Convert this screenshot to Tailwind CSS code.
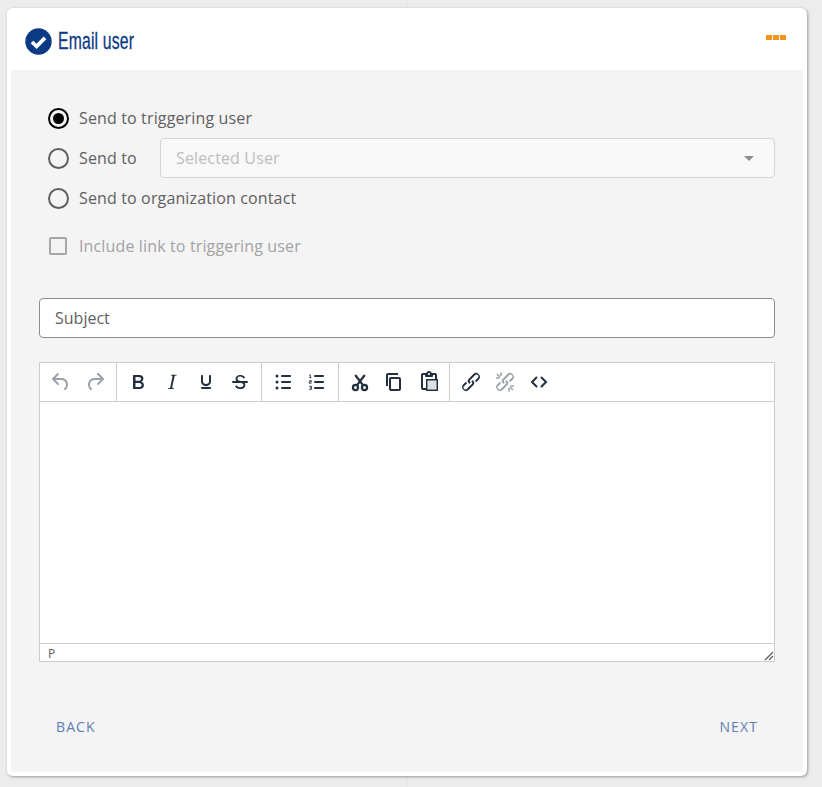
<!doctype html>
<html>
<head>
<meta charset="UTF-8">
<title>Email user</title>
<script src="https://cdn.jsdelivr.net/npm/@tailwindcss/browser@4"></script>
</head>
<body class="bg-[#ececec] font-['Open_Sans',sans-serif]">
<div class="relative h-[787px] w-[822px] overflow-hidden pt-2 pl-[7px]">
  <!-- timeline line behind the card -->
  <div class="absolute top-0 left-[406px] h-full w-px bg-[#e2e2e2]"></div>

  <div class="relative flex h-[768px] w-[800px] flex-col rounded-md bg-white px-1 pb-1 shadow-[1px_1px_3px_rgba(0,0,0,0.35)]">
    <div class="-mx-1 flex h-[62px] shrink-0 items-center justify-between pr-[21px] pl-[18px]">
      <div class="flex items-center gap-[6px]">
        <svg width="27" height="27" viewBox="0 0 27 27" class="mt-[4px]">
          <circle cx="13.5" cy="13.5" r="13.2" fill="#0b3a84"/>
          <path d="M7 14l4.6 4.4 8.4-8.6" fill="none" stroke="#fff" stroke-width="3.8"/>
        </svg>
        <span class="mt-[4px] w-[77px] origin-left scale-x-[0.655] font-['Liberation_Sans',sans-serif] text-[24px] leading-none tracking-[0.3px] whitespace-nowrap text-[#0b3a84] [-webkit-text-stroke:0.3px_#0b3a84]">Email user</span>
      </div>
      <div class="mb-[3px] flex gap-px">
        <span class="h-[5px] w-[6px] bg-[#f7941d]"></span>
        <span class="h-[5px] w-[6px] bg-[#f7941d]"></span>
        <span class="h-[5px] w-[6px] bg-[#f7941d]"></span>
      </div>
    </div>

    <div class="flex-1 bg-[#f4f4f4] px-7 pt-[28px] text-[16px] tracking-[0.14px] text-[#606060]">
      <div class="flex h-10 items-center pl-[9px]">
        <span class="flex h-[21px] w-[21px] items-center justify-center rounded-full border-2 border-black">
          <span class="h-[11px] w-[11px] rounded-full bg-black"></span>
        </span>
        <span class="ml-[10px]">Send to triggering user</span>
      </div>
      <div class="flex h-10 items-center pl-[9px]">
        <span class="h-[21px] w-[21px] rounded-full border-2 border-[#5f5f5f]"></span>
        <span class="ml-[10px]">Send to</span>
        <div class="ml-auto flex h-10 w-[615px] items-center justify-between rounded border border-[#d4d4d4] bg-[#f8f8f8] pr-[20px] pl-[15px] text-[#bdbdbd]">
          <span>Selected User</span>
          <span class="h-0 w-0 border-x-[5px] border-t-[5px] border-x-transparent border-t-[#8f8f8f]"></span>
        </div>
      </div>
      <div class="flex h-10 items-center pl-[9px]">
        <span class="h-[21px] w-[21px] rounded-full border-2 border-[#5f5f5f]"></span>
        <span class="ml-[10px]">Send to organization contact</span>
      </div>
      <div class="mt-[8px] flex h-10 items-center pl-[10px] text-[#a3a3a3]">
        <span class="h-[18px] w-[18px] rounded-[2px] border-2 border-[#a6a6a6]"></span>
        <span class="ml-[12px]">Include link to triggering user</span>
      </div>

      <div class="mt-[32px] flex h-10 items-center rounded border border-[#8c8c8c] bg-white px-[15px] tracking-normal text-[#606060]">Subject</div>

      <div class="mt-[24px] h-[300px] border border-[#cccccc] bg-white">
        <div class="flex h-[39px] items-stretch border-b border-[#cccccc]">
          <div class="flex w-[77px] items-center gap-[10px] border-r border-[#cccccc] pl-[9px]">
            <svg width="24" height="24" viewBox="0 0 24 24" fill="#222f3e" fill-opacity="0.45"><path d="M6.4 8H12c3.7 0 6.2 2 6.8 5.1.6 2.7-.4 5.6-2.3 6.8a1 1 0 0 1-1-1.8c1.1-.6 1.8-2.7 1.4-4.6-.5-2.1-2.1-3.5-4.9-3.5H6.4l3.3 3.3a1 1 0 1 1-1.4 1.4l-5-5a1 1 0 0 1 0-1.4l5-5a1 1 0 0 1 1.4 1.4L6.4 8z"/></svg>
            <svg width="24" height="24" viewBox="0 0 24 24" fill="#222f3e" fill-opacity="0.45"><path d="M17.6 10H12c-2.8 0-4.4 1.4-4.9 3.5-.4 2 .3 4 1.4 4.6a1 1 0 1 1-1 1.8c-2-1.2-2.9-4.1-2.3-6.8.6-3 3-5.1 6.8-5.1h5.6l-3.3-3.3a1 1 0 1 1 1.4-1.4l5 5a1 1 0 0 1 0 1.4l-5 5a1 1 0 0 1-1.4-1.4l3.3-3.3z"/></svg>
          </div>
          <div class="flex w-[145px] items-center gap-[10px] border-r border-[#cccccc] pl-[9px]">
            <svg width="24" height="24" viewBox="0 0 24 24" fill="#222f3e"><path d="M7.8 19c-.3 0-.5 0-.6-.2l-.2-.5V5.7c0-.2 0-.4.2-.5l.6-.2h5c1.5 0 2.7.3 3.5 1 .7.6 1.1 1.4 1.1 2.5a3 3 0 0 1-.6 1.9c-.4.6-1 1-1.6 1.2.4.1.9.3 1.3.6s.8.7 1 1.2c.3.4.4 1 .4 1.6 0 1.3-.4 2.3-1.3 3-.8.7-2 1-3.7 1H7.8zm4.6-8.2c1.8 0 2.7-.6 2.7-1.8 0-1.3-.9-2-2.8-2H9.5v3.8h2.9zm-2.9 6.2h3.3c1.9 0 2.8-.7 2.8-2.1 0-1.3-1-2-3-2h-3.1v4.1z"/></svg>
            <svg width="24" height="24" viewBox="0 0 24 24" fill="#222f3e"><path d="M16.7 4.7l-.1.9h-.3c-.6 0-1 0-1.4.3-.3.3-.4.6-.5 1.1l-2.1 9.8v.6c0 .5.4.8 1.4.8h.2l-.2.8H8l.2-.8h.2c1.1 0 1.8-.5 2-1.5l2-9.8.1-.5c0-.6-.4-.8-1.4-.8h-.3l.2-.9h5.8z"/></svg>
            <svg width="24" height="24" viewBox="0 0 24 24" fill="#222f3e"><path d="M16 5c.6 0 1 .4 1 1v5.5a4 4 0 0 1-.4 1.8l-1 1.4a5.3 5.3 0 0 1-5.5 1 5 5 0 0 1-1.6-1c-.5-.4-.8-.9-1.1-1.4a4 4 0 0 1-.4-1.8V6c0-.6.4-1 1-1s1 .4 1 1v5.5c0 .3 0 .6.2 1l.6.7a3.3 3.3 0 0 0 2.2.8 3.4 3.4 0 0 0 2.2-.8c.3-.2.4-.5.6-.8l.2-.9V6c0-.6.4-1 1-1zM8 17h8c.6 0 1 .4 1 1s-.4 1-1 1H8a1 1 0 0 1 0-2z"/></svg>
            <svg width="24" height="24" viewBox="0 0 24 24" fill="#222f3e"><path d="M15.6 8.5c-.5-.7-1-1.1-1.3-1.3-.6-.4-1.3-.6-2-.6-2.7 0-2.8 1.7-2.8 2.1 0 1.6 1.8 2 3.2 2.3 4.4.9 4.6 2.8 4.6 3.9 0 1.4-.7 4.1-5 4.1A6.2 6.2 0 0 1 7 16.4l1.5-1.1c.4.6 1.6 2 3.7 2 1.6 0 2.5-.4 3-1.2.4-.8.3-2-.8-2.6-.7-.4-1.6-.7-2.9-1-1-.2-3.9-.8-3.9-3.6C7.6 6 10.3 5 12.4 5c2.9 0 4.2 1.6 4.7 2.4l-1.5 1.1z"/><path d="M5 11h14a1 1 0 0 1 0 2H5a1 1 0 0 1 0-2z"/></svg>
          </div>
          <div class="flex w-[77px] items-center gap-[10px] border-r border-[#cccccc] pl-[9px]">
            <svg width="24" height="24" viewBox="0 0 24 24" fill="#222f3e"><path d="M11 5h8c.6 0 1 .4 1 1s-.4 1-1 1h-8a1 1 0 0 1 0-2zm0 6h8c.6 0 1 .4 1 1s-.4 1-1 1h-8a1 1 0 0 1 0-2zm0 6h8c.6 0 1 .4 1 1s-.4 1-1 1h-8a1 1 0 0 1 0-2z"/><circle cx="6" cy="6" r="1.5"/><circle cx="6" cy="12" r="1.5"/><circle cx="6" cy="18" r="1.5"/></svg>
            <svg width="24" height="24" viewBox="0 0 24 24" fill="#222f3e"><path d="M10 17h8c.6 0 1 .4 1 1s-.4 1-1 1h-8a1 1 0 0 1 0-2zm0-6h8c.6 0 1 .4 1 1s-.4 1-1 1h-8a1 1 0 0 1 0-2zm0-6h8c.6 0 1 .4 1 1s-.4 1-1 1h-8a1 1 0 1 1 0-2z"/><path fill="none" stroke="#222f3e" stroke-width="0.9" d="M4.3 5.2l1-.6v3M4.2 7.7h2.2M4.2 10.7h2.2v1.1H4.2v1.4h2.3M4.2 16.2h2.2v3.2H4.2M4.8 17.8h1.6"/></svg>
          </div>
          <div class="flex w-[111px] items-center gap-[10px] border-r border-[#cccccc] pl-[9px]">
            <svg width="24" height="24" viewBox="0 0 24 24" fill="none" stroke="#222f3e" stroke-width="2.2"><circle cx="7.5" cy="17.5" r="2.6"/><circle cx="16.5" cy="17.5" r="2.6"/><path d="M9 15.2L16.8 5M15 15.2L7.2 5"/></svg>
            <svg width="24" height="24" viewBox="0 0 24 24" fill="#222f3e"><path d="M16 3H6a2 2 0 0 0-2 2v11h2V5h10V3zm1 4a2 2 0 0 1 2 2v10a2 2 0 0 1-2 2H9a2 2 0 0 1-2-2V9c0-1.2.9-2 2-2h8zm0 12V9H9v10h8z"/></svg>
            <svg width="24" height="24" viewBox="0 0 24 24" fill="#222f3e" class="ml-px"><path d="M18 9V5h-2v1c0 .6-.4 1-1 1H9a1 1 0 0 1-1-1V5H6v13h3V9h9zM9 20H6a2 2 0 0 1-2-2V5c0-1.1.9-2 2-2h3.2A3 3 0 0 1 12 1a3 3 0 0 1 2.8 2H18a2 2 0 0 1 2 2v4h1v12H9v-1zm1.5-9.5v9h9v-9h-9zM12 3a1 1 0 0 0-1 1c0 .5.4 1 1 1s1-.5 1-1-.4-1-1-1z"/><path fill-opacity="0.15" d="M10.5 10.5h9v9h-9z"/></svg>
          </div>
          <div class="flex flex-1 items-center gap-[10px] pl-[9px]">
            <svg width="24" height="24" viewBox="0 0 24 24" fill="#222f3e"><path d="M6.2 12.3a1 1 0 0 1 1.4 1.4l-2 2a2 2 0 1 0 2.6 2.8l4.8-4.8a1 1 0 0 0 0-1.4 1 1 0 1 1 1.4-1.3 2.9 2.9 0 0 1 0 4L9.6 20a3.9 3.9 0 0 1-5.5-5.5l2-2zm11.6-.6a1 1 0 0 1-1.4-1.4l2-2a2 2 0 1 0-2.6-2.8L11 10.3a1 1 0 0 0 0 1.4A1 1 0 1 1 9.6 13a2.9 2.9 0 0 1 0-4L14.4 4a3.9 3.9 0 0 1 5.5 5.5l-2 2z"/></svg>
            <svg width="24" height="24" viewBox="0 0 24 24" fill="#222f3e" fill-opacity="0.45"><path d="M6.2 12.3a1 1 0 0 1 1.4 1.4l-2 2a2 2 0 1 0 2.6 2.8l4.8-4.8a1 1 0 0 0 0-1.4 1 1 0 1 1 1.4-1.3 2.9 2.9 0 0 1 0 4L9.6 20a3.9 3.9 0 0 1-5.5-5.5l2-2zm11.6-.6a1 1 0 0 1-1.4-1.4l2-2a2 2 0 1 0-2.6-2.8L11 10.3a1 1 0 0 0 0 1.4A1 1 0 1 1 9.6 13a2.9 2.9 0 0 1 0-4L14.4 4a3.9 3.9 0 0 1 5.5 5.5l-2 2z"/><path fill="none" stroke="#222f3e" stroke-opacity="0.45" stroke-width="1.6" d="M3 8h3.5M8 2.5V6M4 4l3 3M21 16h-3.5M16 21.5V18M20 20l-3-3"/></svg>
            <svg width="24" height="24" viewBox="0 0 24 24" fill="none" stroke="#222f3e" stroke-width="2" stroke-linecap="round"><path d="M9.5 7.5L5 12l4.5 4.5M14.5 7.5L19 12l-4.5 4.5"/></svg>
          </div>
        </div>
        <div class="h-[241px]"></div>
        <div class="relative flex h-[18px] items-center border-t border-[#cccccc] pt-[2px] pl-[8px] text-[12px] tracking-normal text-[#606060]">
          P
          <svg width="10" height="10" viewBox="0 0 10 10" class="absolute right-0 bottom-0" fill="none" stroke="#5a5a5a" stroke-width="1.2"><path d="M1 9L9 1M5 9l4-4"/></svg>
        </div>
      </div>

      <div class="mt-[54px] flex justify-between px-[17px] text-[14px] tracking-[1.1px] text-[#5f7fb3]">
        <span>BACK</span>
        <span>NEXT</span>
      </div>
    </div>
  </div>
</div>
</body>
</html>
